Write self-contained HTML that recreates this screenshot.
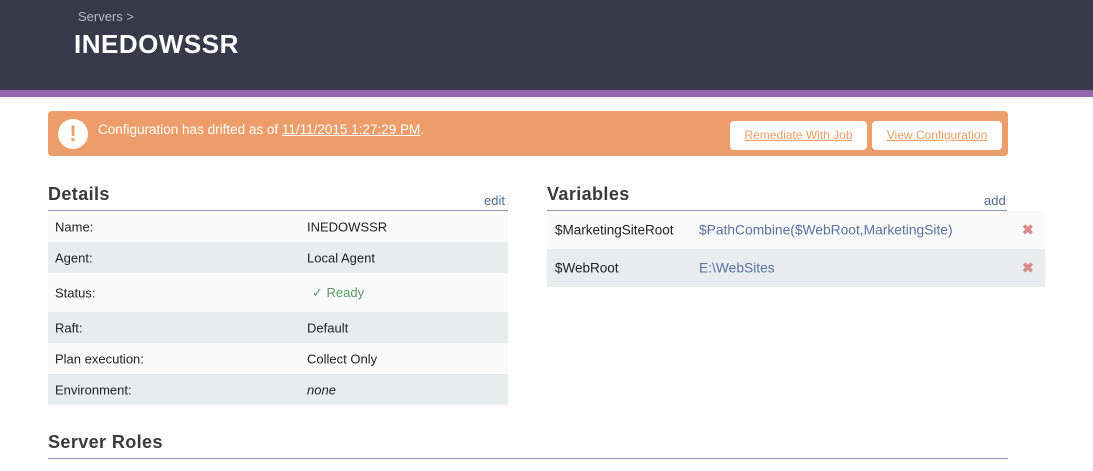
<!DOCTYPE html>
<html><head><style>
*{margin:0;padding:0;box-sizing:border-box}
body{width:1093px;height:471px;overflow:hidden;background:#fff;font-family:"Liberation Sans",sans-serif;font-size:13px;color:#222;position:relative}
.hdr{position:absolute;left:0;top:0;width:1093px;height:90px;background:#383a4c}
.stripe{position:absolute;left:0;top:90px;width:1093px;height:7px;background:#9568ad}
.crumb{position:absolute;left:78px;top:9px;color:#b6b8c2;font-size:13px}
.title{position:absolute;left:74px;top:29px;color:#fff;font-size:26px;font-weight:bold;letter-spacing:.5px}
.alert{position:absolute;left:48px;top:111px;width:960px;height:45px;background:#ed9d69;border-radius:4px}
.alert .ic{position:absolute;left:10px;top:8px;width:30px;height:30px;border-radius:50%;background:#fff;color:#ed9d69;font-weight:bold;font-size:22px;text-align:center;line-height:30px}
.alert .msg{position:absolute;left:50px;top:11px;color:#fff;font-size:13.5px}
.alert u{text-decoration:underline}
.btn{position:absolute;top:10px;height:29px;background:#fff;border-radius:4px;color:#ed9d69;text-decoration:underline;font-size:12px;text-align:center;line-height:29px}
h2{position:absolute;font-size:18px;font-weight:bold;color:#3a3a3a;letter-spacing:.4px}
.line{position:absolute;height:1px;background:#8a9ab0}
.lnk{position:absolute;color:#4e6a8a;font-size:13px}
.row{position:absolute;left:48px;width:460px;font-size:13px}
.row span{position:absolute;top:50%;transform:translateY(-50%)}
.a{background:#fafafa}.b{background:#e8ecef}
.x{color:#d98a8a;font-weight:bold;font-size:14px}
</style></head><body>
<div class="hdr"></div><div class="stripe"></div>
<div class="crumb">Servers &gt;</div>
<div class="title">INEDOWSSR</div>
<div class="alert"><div class="ic">!</div>
<div class="msg">Configuration has drifted as of <u>11/11/2015 1:27:29 PM</u>.</div>
<div class="btn" style="left:682px;width:137px">Remediate With Job</div>
<div class="btn" style="left:824px;width:130px">View Configuration</div>
</div>
<h2 style="left:48px;top:184px">Details</h2>
<div class="lnk" style="left:484px;top:193px">edit</div>
<div class="line" style="left:48px;top:210px;width:460px"></div>
<div class="row a" style="top:211px;height:31px"><span style="left:7px">Name:</span><span style="left:259px">INEDOWSSR</span></div>
<div class="row b" style="top:242px;height:31px"><span style="left:7px">Agent:</span><span style="left:259px">Local Agent</span></div>
<div class="row a" style="top:273px;height:39px"><span style="left:7px">Status:</span><span style="left:264px;color:#5a9a6a">✓ Ready</span></div>
<div class="row b" style="top:312px;height:31px"><span style="left:7px">Raft:</span><span style="left:259px">Default</span></div>
<div class="row a" style="top:343px;height:31px"><span style="left:7px">Plan execution:</span><span style="left:259px">Collect Only</span></div>
<div class="row b" style="top:374px;height:31px"><span style="left:7px">Environment:</span><span style="left:259px;font-style:italic">none</span></div>
<h2 style="left:547px;top:184px">Variables</h2>
<div class="lnk" style="left:984px;top:193px">add</div>
<div class="line" style="left:547px;top:210px;width:460px"></div>
<div class="row a" style="left:547px;width:498px;top:211px;height:38px"><span style="left:8px;font-size:13.5px">$MarketingSiteRoot</span><span style="left:152px;color:#5a72a0;font-size:13.8px">$PathCombine($WebRoot,MarketingSite)</span><span class="x" style="left:475px">✖</span></div>
<div class="row b" style="left:547px;width:498px;top:249px;height:38px"><span style="left:8px;font-size:13.5px">$WebRoot</span><span style="left:152px;color:#5a72a0;font-size:13.8px">E:\WebSites</span><span class="x" style="left:475px">✖</span></div>
<h2 style="left:48px;top:432px">Server Roles</h2>
<div class="line" style="left:48px;top:458px;width:960px"></div>
</body></html>
